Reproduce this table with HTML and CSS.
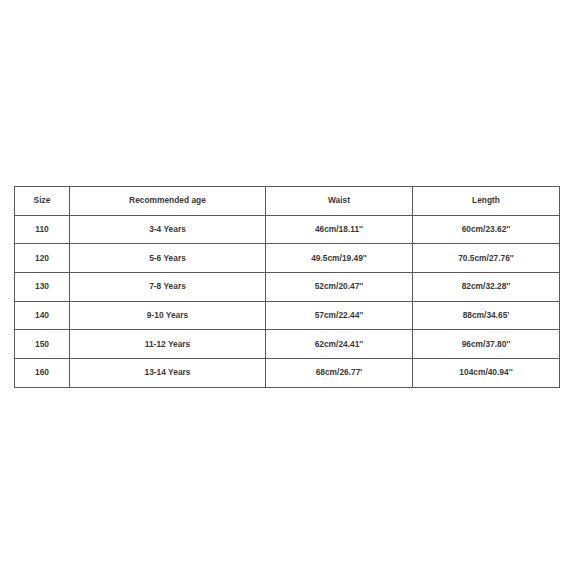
FILE: index.html
```html
<!DOCTYPE html>
<html>
<head>
<meta charset="utf-8">
<link rel="stylesheet" href="styles.css">
</head>
<body>
<div class="page">
<table class="size-table">
<colgroup>
<col class="c1"><col class="c2"><col class="c3"><col class="c4">
</colgroup>
<tr><td>Size</td><td>Recommended age</td><td>Waist</td><td>Length</td></tr>
<tr><td>110</td><td>3-4 Years</td><td>46cm/18.11''</td><td>60cm/23.62''</td></tr>
<tr><td>120</td><td>5-6 Years</td><td>49.5cm/19.49''</td><td>70.5cm/27.76''</td></tr>
<tr><td>130</td><td>7-8 Years</td><td>52cm/20.47''</td><td>82cm/32.28''</td></tr>
<tr><td>140</td><td>9-10 Years</td><td>57cm/22.44''</td><td>88cm/34.65'</td></tr>
<tr><td>150</td><td>11-12 Years</td><td>62cm/24.41''</td><td>96cm/37.80''</td></tr>
<tr><td>160</td><td>13-14 Years</td><td>68cm/26.77'</td><td>104cm/40.94''</td></tr>
</table>
</div>
</body>
</html>
```
FILE: styles.css
```css
html, body {
  margin: 0;
  padding: 0;
  background: #ffffff;
}
.page {
  width: 573px;
  height: 573px;
  padding-top: 186px;
  padding-left: 14px;
  box-sizing: border-box;
}
.size-table {
  border-collapse: collapse;
  table-layout: fixed;
  width: 545px;
  font-family: "Liberation Sans", Arial, sans-serif;
  font-size: 8.4px;
  font-weight: bold;
  color: #3a3a3a;
}
.c1 { width: 55px; }
.c2 { width: 196px; }
.c3 { width: 147px; }
.c4 { width: 147px; }
.size-table td {
  border: 1px solid #5a5a5a;
  height: 28.7px;
  padding: 0 0 1px 0;
  text-align: center;
  vertical-align: middle;
  box-sizing: border-box;
}
```
